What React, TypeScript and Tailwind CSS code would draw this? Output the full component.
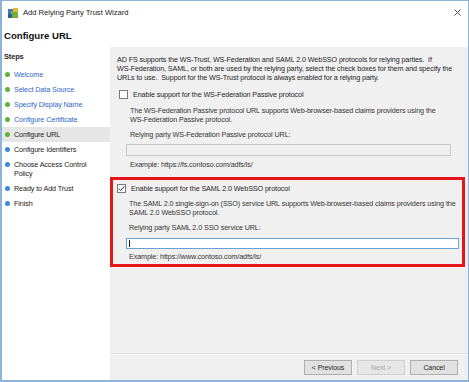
import React from "react";

const steps = [
  { label: "Welcome", done: true },
  { label: "Select Data Source", done: true },
  { label: "Specify Display Name", done: true },
  { label: "Configure Certificate", done: true },
  { label: "Configure URL", done: true, current: true },
  { label: "Configure Identifiers" },
  { label: "Choose Access Control Policy" },
  { label: "Ready to Add Trust" },
  { label: "Finish" },
];

function Dot({ green }: { green?: boolean }) {
  return (
    <span
      className={
        "mt-[2px] w-[5px] h-[5px] rounded-full shrink-0 " +
        (green ? "bg-[#5cb23a]" : "bg-[#3a8ad8]")
      }
    />
  );
}

function Checkbox({ checked }: { checked?: boolean }) {
  return (
    <span className="w-[9px] h-[9px] border border-[#7a7a7a] bg-white flex items-center justify-center shrink-0">
      {checked && (
        <svg width="7" height="7" viewBox="0 0 7 7">
          <path d="M0.8 3.6 L2.7 5.5 L6.3 1.2" fill="none" stroke="#333" strokeWidth="1" />
        </svg>
      )}
    </span>
  );
}

export default function App() {
  return (
    <div
      className="w-[469px] h-[382px] bg-white border border-[#8db4d8] border-l-2 border-b-2 flex flex-col text-[7.2px] leading-[9px] tracking-[-0.1px] text-[#1e1e1e] overflow-hidden"
      style={{ fontFamily: '"Liberation Sans", Arial, sans-serif' }}
    >
      {/* title bar */}
      <div className="h-[23px] flex items-center pl-[5px] shrink-0">
        <svg width="12" height="12" viewBox="0 0 12 12" className="mr-[4px]">
          <rect x="1" y="2" width="6" height="6" fill="#3d78c4" />
          <rect x="4" y="4" width="7" height="7" fill="#6fb33d" />
          <rect x="6" y="1" width="5" height="4" fill="#e6b730" />
          <rect x="1" y="7" width="4" height="4" fill="#2f5d9e" />
        </svg>
        <span className="text-[7.6px] tracking-normal text-[#222]">Add Relying Party Trust Wizard</span>
        <span className="ml-auto mr-[7px]">
          <svg width="7" height="7" viewBox="0 0 7 7">
            <path d="M0.5 0.5 L6.5 6.5 M6.5 0.5 L0.5 6.5" stroke="#555" strokeWidth="1" />
          </svg>
        </span>
      </div>

      {/* page header */}
      <div className="h-[23px] px-[2px] shrink-0">
        <div className="text-[9.6px] leading-[12px] tracking-normal font-bold text-[#111] mt-[6px]">Configure URL</div>
      </div>

      <div className="flex flex-1 min-h-0">
        {/* steps */}
        <div className="w-[108px] shrink-0 bg-white pt-[5px]">
          <div className="px-[2px] font-bold text-[7.4px] mb-[6px]">Steps</div>
          <div className="flex flex-col">
            {steps.map((s) => (
              <div
                key={s.label}
                className={
                  "flex items-start gap-[4px] pl-[3px] pr-[14px] py-[3px] " + (s.current ? "bg-[#e6e6e6]" : "")
                }
              >
                <Dot green={s.done} />
                <span className={s.done && !s.current ? "text-[#2f66c9]" : "text-[#222]"}>{s.label}</span>
              </div>
            ))}
          </div>
        </div>

        {/* content */}
        <div className="flex-1 bg-[#f0f0f0] flex flex-col">
          <div className="flex-1 pl-[7px] pr-[3px] pt-[8px]">
            <p className="whitespace-nowrap">
              AD FS supports the WS-Trust, WS-Federation and SAML 2.0 WebSSO protocols for relying parties.&nbsp; If
              <br />
              WS-Federation, SAML, or both are used by the relying party, select the check boxes for them and specify the
              <br />
              URLs to use.&nbsp; Support for the WS-Trust protocol is always enabled for a relying party.
            </p>

            <div className="mt-[8px] flex items-center gap-[5px] pl-[2px]">
              <Checkbox />
              <span>Enable support for the WS-Federation Passive protocol</span>
            </div>
            <div className="pl-[13px] pr-[14px] mt-[7px] text-[#333]">
              <p className="whitespace-nowrap">
                The WS-Federation Passive protocol URL supports Web-browser-based claims providers using the
                <br />
                WS-Federation Passive protocol.
              </p>
              <p className="mt-[6px]">Relying party WS-Federation Passive protocol URL:</p>
              <div className="mt-[5px] -ml-[4px] h-[12px] border border-[#c9c9c9] bg-[#f0f0f0]" />
              <p className="mt-[4px]">Example: https://fs.contoso.com/adfs/ls/</p>
            </div>

            <div className="mt-[8px] -ml-[7px] border-[3px] border-[#e8141c] pt-[4px] pb-[3px]">
              <div className="flex items-center gap-[5px] pl-[4px]">
                <Checkbox checked />
                <span>Enable support for the SAML 2.0 WebSSO protocol</span>
              </div>
              <div className="pl-[16px] pr-[3px] mt-[6px] text-[#333]">
                <p className="whitespace-nowrap">
                  The SAML 2.0 single-sign-on (SSO) service URL supports Web-browser-based claims providers using the
                  <br />
                  SAML 2.0 WebSSO protocol.
                </p>
                <p className="mt-[6px]">Relying party SAML 2.0 SSO service URL:</p>
                <div className="mt-[6px] -ml-[3px] h-[11px] border border-[#6aa0d8] bg-white flex items-center pl-[2px]">
                  <span className="w-px h-[7px] bg-[#222]" />
                </div>
                <p className="mt-[3px]">Example: https://www.contoso.com/adfs/ls/</p>
              </div>
            </div>
          </div>

          <div className="border-t border-[#dcdcdc] shadow-[0_1px_0_#fafafa]" />
          <div className="h-[26px] flex items-center justify-end gap-[5px] pr-[10px] shrink-0">
            <button className="w-[48px] h-[15px] border border-[#adadad] bg-[#e1e1e1] text-[7px] text-[#222]">
              &lt; Previous
            </button>
            <button className="w-[48px] h-[15px] border border-[#cfcfcf] bg-[#e6e6e6] text-[7px] text-[#a8a8a8]">
              Next &gt;
            </button>
            <button className="w-[48px] h-[15px] border border-[#adadad] bg-[#e1e1e1] text-[7px] text-[#222]">
              Cancel
            </button>
          </div>
        </div>
      </div>
    </div>
  );
}
